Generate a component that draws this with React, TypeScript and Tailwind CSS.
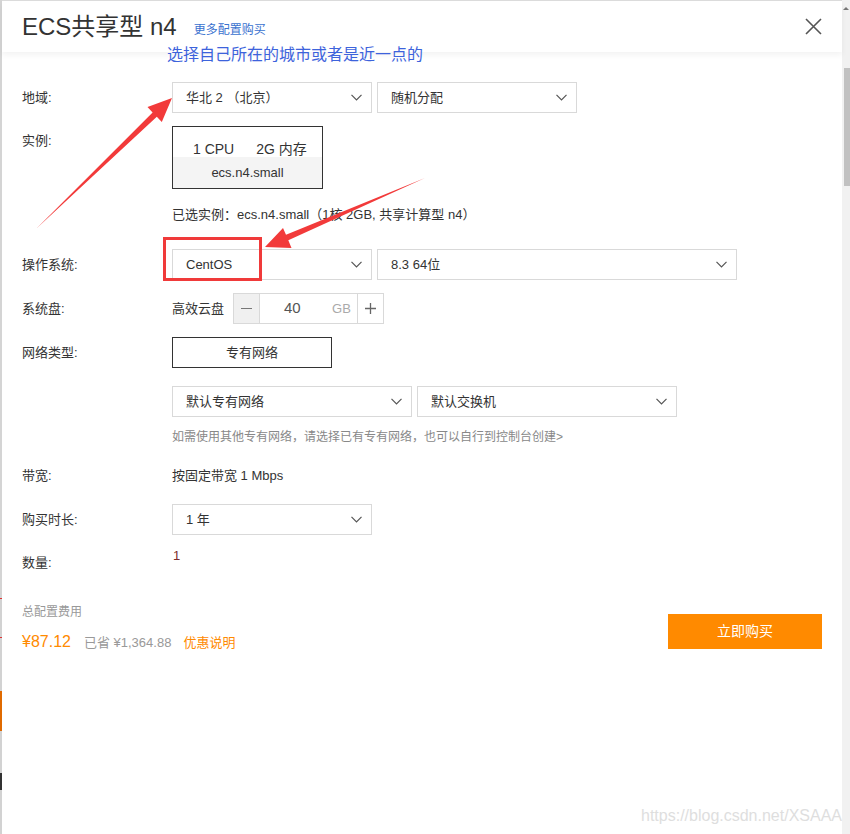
import React from "react";

const F = "font-['Liberation_Sans','Noto_Sans_CJK_SC',sans-serif]";

function Chevron() {
  return (
    <svg width="11" height="7" viewBox="0 0 11 7" className="shrink-0">
      <polyline points="0.5,0.8 5.5,5.8 10.5,0.8" fill="none" stroke="#555" strokeWidth="1.2" />
    </svg>
  );
}

function Select({ text, w }: { text: string; w: string }) {
  return (
    <div className={`flex items-center justify-between border border-[#d9d9d9] h-[31px] pl-[13px] pr-[9px] text-[13px] text-[#333] bg-white ${w}`}>
      <span>{text}</span>
      <Chevron />
    </div>
  );
}

function Label({ children, extra = "" }: { children: React.ReactNode; extra?: string }) {
  return <div className={`w-[150px] shrink-0 text-[13px] text-[#333] ${extra}`}>{children}</div>;
}

export default function App() {
  return (
    <div className={`relative w-[850px] h-[834px] overflow-hidden bg-white flex ${F}`}>
      {/* background page strip */}
      <div className="w-[2px] flex flex-col bg-[#d2d2d2]">
        <div className="h-[598px] bg-[#d4d4d4]" />
        <div className="h-[1px] bg-[#d33]" />
        <div className="h-[38px]" />
        <div className="h-[1px] bg-[#d33]" />
        <div className="h-[53px]" />
        <div className="h-[40px] bg-[#e06a00]" />
        <div className="h-[42px]" />
        <div className="h-[17px] bg-[#333]" />
        <div className="flex-1" />
      </div>

      {/* panel */}
      <div className="flex-1 flex flex-col border-t border-[#dcdcdc]">
        <div className="relative z-10 h-[51px] flex items-center pl-[20px] pr-[20px] bg-white shadow-[0_3px_6px_rgba(0,0,0,0.05)]">
          <span className="text-[24px] leading-none text-[#333]">ECS共享型 n4</span>
          <span className="ml-[17px] mt-[6px] text-[12px] text-[#3a72cf]">更多配置购买</span>
          <svg width="17" height="17" viewBox="0 0 17 17" className="ml-auto">
            <path d="M1 1 L16 16 M16 1 L1 16" stroke="#555" strokeWidth="1.6" fill="none" />
          </svg>
        </div>

        <div className="flex flex-col pl-[20px] pr-[20px]">
          {/* 地域 */}
          <div className="flex items-center mt-[30px]">
            <Label>地域:</Label>
            <div className="flex gap-[5px]">
              <Select text="华北 2 （北京）" w="w-[200px]" />
              <Select text="随机分配" w="w-[200px]" />
            </div>
          </div>

          {/* 实例 */}
          <div className="flex mt-[13px]">
            <Label extra="leading-[30px]">实例:</Label>
            <div className="w-[151px] h-[63px] border border-[#333] flex flex-col">
              <div className="h-[30px] flex items-end pl-[20px] gap-[22px] text-[14px] leading-[16px] text-[#333] bg-white">
                <span>1 CPU</span>
                <span>2G 内存</span>
              </div>
              <div className="flex-1 flex items-center justify-center text-[13px] text-[#333] bg-[#f4f4f4]">ecs.n4.small</div>
            </div>
          </div>

          <div className="flex mt-[16px]">
            <div className="w-[150px] shrink-0" />
            <div className="text-[13px] leading-[20px] text-[#333]">已选实例：ecs.n4.small（1核 2GB, 共享计算型 n4）</div>
          </div>

          {/* 操作系统 */}
          <div className="flex items-center mt-[24px]">
            <Label>操作系统:</Label>
            <div className="flex gap-[5px]">
              <Select text="CentOS" w="w-[200px]" />
              <Select text="8.3 64位" w="w-[360px]" />
            </div>
          </div>

          {/* 系统盘 */}
          <div className="flex items-center mt-[13px]">
            <Label>系统盘:</Label>
            <span className="text-[13px] text-[#333]">高效云盘</span>
            <div className="ml-[9px] flex h-[31px] border border-[#d9d9d9]">
              <div className="w-[26px] bg-[#f0f0f0] border-r border-[#d9d9d9] flex items-center justify-center">
                <div className="w-[11px] h-[1.5px] bg-[#777]" />
              </div>
              <div className="w-[97px] relative flex items-center">
                <span className="absolute left-[24px] text-[15px] text-[#555]">40</span>
                <span className="absolute left-[72px] text-[13px] text-[#aaa]">GB</span>
              </div>
              <div className="w-[26px] border-l border-[#d9d9d9] flex items-center justify-center">
                <svg width="11" height="11" viewBox="0 0 11 11">
                  <path d="M0 5.5 H11 M5.5 0 V11" stroke="#666" strokeWidth="1.3" />
                </svg>
              </div>
            </div>
          </div>

          {/* 网络类型 */}
          <div className="flex items-center mt-[13px]">
            <Label>网络类型:</Label>
            <div className="w-[160px] h-[31px] border border-[#333] flex items-center justify-center text-[13px] text-[#333]">专有网络</div>
          </div>

          <div className="flex mt-[18px]">
            <div className="w-[150px] shrink-0" />
            <div className="flex gap-[5px]">
              <Select text="默认专有网络" w="w-[240px]" />
              <Select text="默认交换机" w="w-[260px]" />
            </div>
          </div>

          <div className="flex mt-[11px]">
            <div className="w-[150px] shrink-0" />
            <div className="text-[12px] leading-[18px] text-[#888]">如需使用其他专有网络，请选择已有专有网络，也可以自行到控制台创建&gt;</div>
          </div>

          {/* 带宽 */}
          <div className="flex items-center mt-[20px] leading-[20px]">
            <Label>带宽:</Label>
            <span className="text-[13px] text-[#333]">按固定带宽 1 Mbps</span>
          </div>

          {/* 购买时长 */}
          <div className="flex items-center mt-[18px]">
            <Label>购买时长:</Label>
            <Select text="1 年" w="w-[200px]" />
          </div>

          {/* 数量 */}
          <div className="flex mt-[11px]">
            <Label extra="leading-[20px] mt-[7px]">数量:</Label>
            <span className="text-[13px] leading-[20px] text-[#7b2c2c] pl-[1px]">1</span>
          </div>

          {/* footer */}
          <div className="flex mt-[30px]">
            <div className="flex flex-col">
              <div className="text-[12px] leading-[18px] text-[#999]">总配置费用</div>
              <div className="flex items-end mt-[9px] h-[22px]">
                <span className="text-[16px] leading-[20px] text-[#ff8a00]">¥87.12</span>
                <span className="ml-[13px] text-[13px] leading-[18px] text-[#999]">已省 ¥1,364.88</span>
                <span className="ml-[12px] text-[13px] leading-[18px] text-[#ff8a00]">优惠说明</span>
              </div>
            </div>
            <div className="ml-auto mt-[11px] w-[154px] h-[35px] bg-[#ff8a00] text-white text-[14px] flex items-center justify-center">立即购买</div>
          </div>
        </div>
      </div>

      {/* scrollbar */}
      <div className="w-[8px] bg-[#f1f1f1] flex flex-col">
        <div className="h-[16px] flex items-center justify-center">
          <div className="w-0 h-0 border-l-[3px] border-r-[3px] border-b-[3px] border-l-transparent border-r-transparent border-b-[#777]" />
        </div>
        <div className="h-[52px]" />
        <div className="h-[118px] w-[6px] ml-[2px] bg-[#c1c1c1]" />
        <div className="flex-1" />
      </div>

      {/* annotations */}
      <div className="absolute inset-0 z-20 pointer-events-none">
        <div className="absolute left-[167px] top-[45px] text-[16px] leading-[20px] text-[#3d63dc]">选择自己所在的城市或者是近一点的</div>
        <div className="absolute left-[163px] top-[237px] w-[99px] h-[44px] border-[3px] border-[#f03a3a]" />
        <svg width="850" height="834" className="absolute left-0 top-0">
          <polygon points="172,98 147.5,107 152.6,112.4 37,228 156.8,116.8 161.8,122" fill="#f23a3a" />
          <polygon points="265,247 283,228 286,234.7 425,178 288.3,240.3 291.5,248" fill="#f23a3a" />
        </svg>
        <div className="absolute left-[641px] top-[806px] text-[16px] leading-[20px] text-[#dedede]">https://blog.csdn.net/XSAAA</div>
      </div>
    </div>
  );
}
